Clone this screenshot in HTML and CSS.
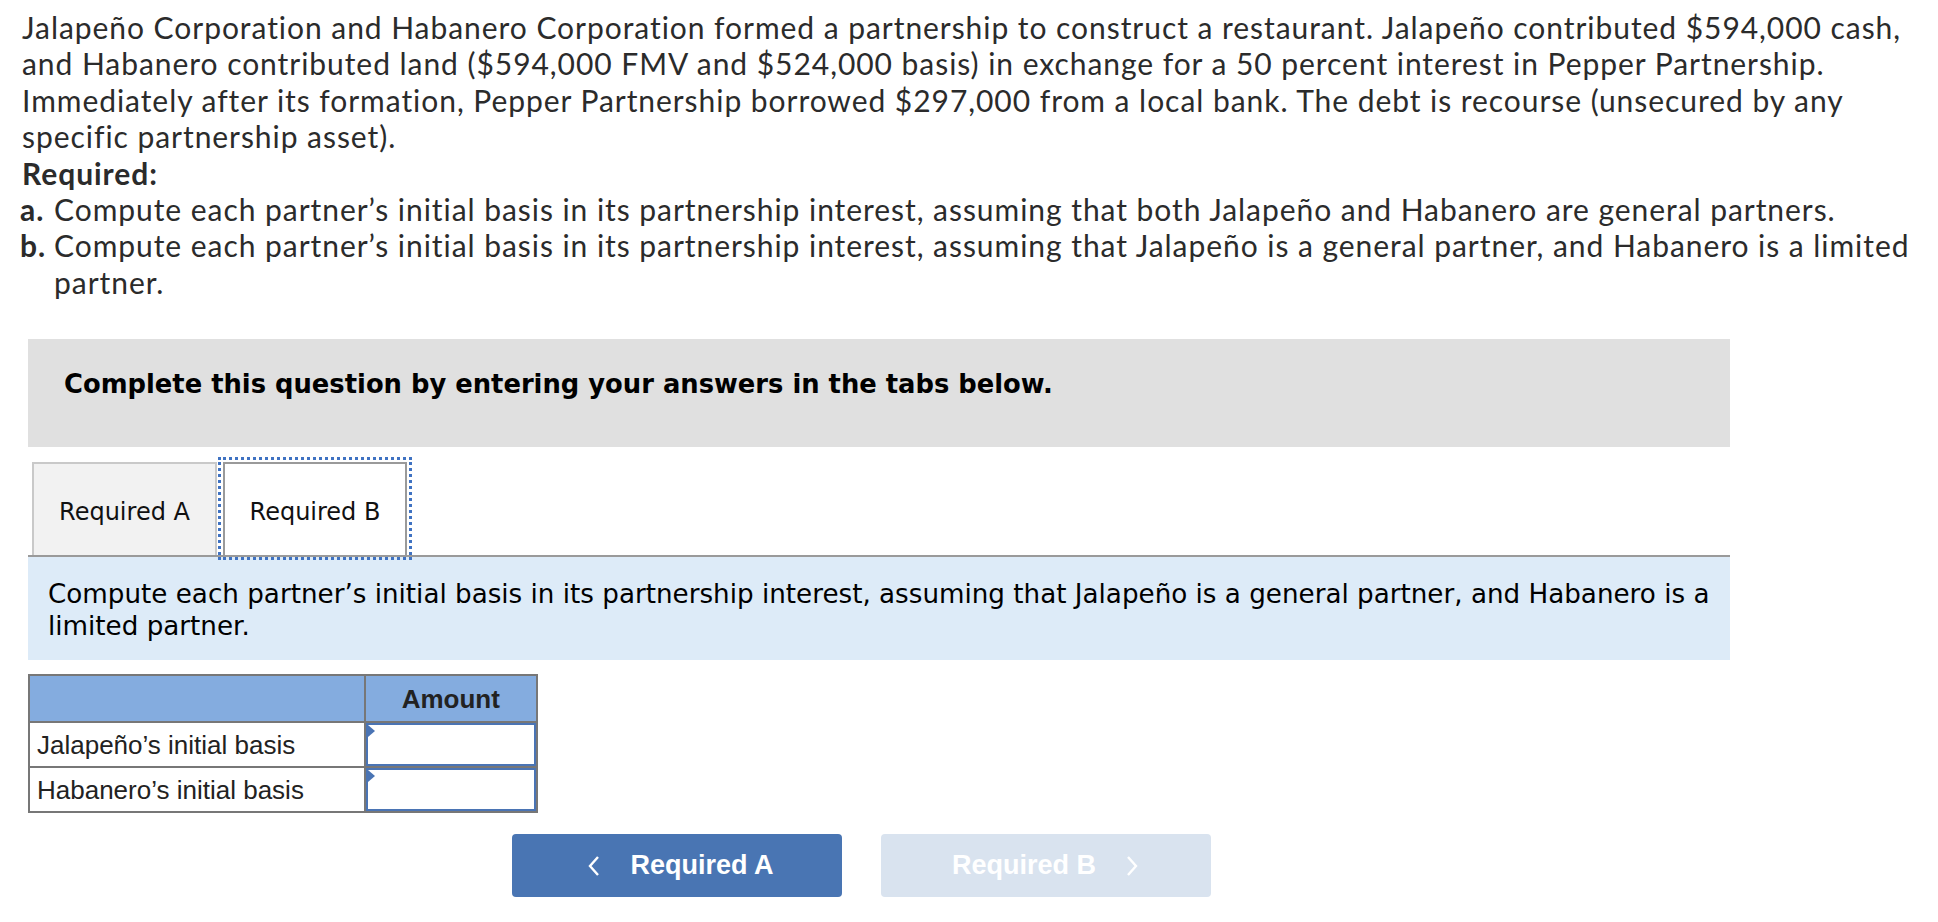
FILE: index.html
```html
<!DOCTYPE html>
<html lang="en">
<head>
<meta charset="utf-8">
<title>Pepper Partnership</title>
<link rel="stylesheet" href="styles.css">
</head>
<body>
<div class="question">
  <p class="prompt">Jalapeño Corporation and Habanero Corporation formed a partnership to construct a restaurant. Jalapeño contributed $594,000 cash, and Habanero contributed land ($594,000 FMV and $524,000 basis) in exchange for a 50 percent interest in Pepper Partnership. Immediately after its formation, Pepper Partnership borrowed $297,000 from a local bank. The debt is recourse (unsecured by any specific partnership asset).</p>
  <p class="req-title">Required:</p>
  <ul class="req-list">
    <li><b class="req-label">a.</b><span>Compute each partner’s initial basis in its partnership interest, assuming that both Jalapeño and Habanero are general partners.</span></li>
    <li><b class="req-label">b.</b><span>Compute each partner’s initial basis in its partnership interest, assuming that Jalapeño is a general partner, and Habanero is a limited partner.</span></li>
  </ul>
</div>

<div class="workarea">
  <div class="instructions">Complete this question by entering your answers in the tabs below.</div>

  <div class="tabs">
    <button class="tab">Required A</button>
    <button class="tab active">Required B</button>
  </div>

  <div class="tab-desc">Compute each partner’s initial basis in its partnership interest, assuming that Jalapeño is a general partner, and Habanero is a limited partner.</div>

  <table class="answer">
    <colgroup><col class="c-label"><col class="c-amt"></colgroup>
    <thead>
      <tr><th></th><th>Amount</th></tr>
    </thead>
    <tbody>
      <tr><td class="lbl">Jalapeño’s initial basis</td><td class="inp"><div class="field"><input type="text" aria-label="Jalapeño’s initial basis"><span class="flag"></span></div></td></tr>
      <tr><td class="lbl">Habanero’s initial basis</td><td class="inp"><div class="field"><input type="text" aria-label="Habanero’s initial basis"><span class="flag"></span></div></td></tr>
    </tbody>
  </table>

  <div class="nav">
    <button class="nav-btn prev">
      <svg class="chev" width="12" height="20" viewBox="0 0 12 20"><polyline points="10,1 2,10 10,19" fill="none" stroke="currentColor" stroke-width="2.4"/></svg>
      <span>Required A</span>
    </button>
    <button class="nav-btn next" disabled>
      <span>Required B</span>
      <svg class="chev" width="12" height="20" viewBox="0 0 12 20"><polyline points="2,1 10,10 2,19" fill="none" stroke="currentColor" stroke-width="2.4"/></svg>
    </button>
  </div>
</div>
</body>
</html>
```
FILE: styles.css
```css
* { box-sizing: border-box; }

body {
  margin: 0;
  background: #fff;
  color: #2b2b2b;
}

.question {
  padding: 9px 4px 0 22px;
  font-family: "Lato", "Open Sans", sans-serif;
  font-size: 30px;
  letter-spacing: 0.95px;
  line-height: 36.4px;
}

.question p { margin: 0; }

.req-title { font-weight: 700; }

.req-list {
  list-style: none;
  margin: 0 0 0 -2px;
  padding: 0;
}

.req-list li { display: flex; }

.req-label {
  flex: 0 0 34px;
  font-weight: 700;
}

.workarea {
  margin: 39px 0 0 28px;
  width: 1702px;
}

.instructions {
  height: 108px;
  padding: 30px 0 0 36px;
  background: #e0e0e0;
  color: #000;
  font-family: "DejaVu Sans", Verdana, sans-serif;
  font-weight: 700;
  font-size: 25.8px;
  line-height: 30px;
}

.tabs {
  display: flex;
  gap: 6px;
  padding: 15px 0 0 4px;
  border-bottom: 2px solid #9a9a9a;
}

.tab {
  height: 93px;
  padding: 4px 0 0;
  border: 2px solid #c9c9c9;
  border-bottom: none;
  background: #f2f2f2;
  color: #111;
  font-family: "DejaVu Sans", Verdana, sans-serif;
  font-size: 24px;
  width: 185px;
  cursor: pointer;
}

.tab.active {
  width: 184px;
  background: #fff;
  border-color: #9a9a9a;
  outline: 3px dotted #3f72c2;
  outline-offset: 2px;
}

.tab-desc {
  padding: 21px 20px 18px;
  background: #ddebf8;
  color: #000;
  font-family: "DejaVu Sans", Verdana, sans-serif;
  font-size: 26.2px;
  line-height: 32px;
}

.answer {
  margin-top: 14px;
  width: 510px;
  border-collapse: collapse;
  border: 2px solid #777;
  font-family: "Liberation Sans", Arial, sans-serif;
  font-size: 26px;
  color: #222;
}

.c-label { width: 337px; }
.c-amt { width: 173px; }

.answer th,
.answer td {
  border: 2px solid #777;
  padding: 0;
}

.answer th {
  height: 47px;
  background: #84acdf;
  font-weight: 700;
  text-align: center;
  padding-top: 2px;
}

.answer td { height: 45px; }

.answer td.lbl {
  padding: 1px 0 0 7px;
  text-align: left;
}

.field {
  position: relative;
  height: 43px;
}

.field input {
  display: block;
  width: 100%;
  height: 100%;
  margin: 0;
  border: 2px solid #4a74b4;
  background: #fff;
  font: inherit;
  padding: 0 6px;
  text-align: right;
}

.flag {
  position: absolute;
  left: 2px;
  top: 2px;
  width: 0;
  height: 0;
  border-top: 6px solid transparent;
  border-bottom: 6px solid transparent;
  border-left: 7px solid #4a74b4;
}

.nav {
  display: flex;
  justify-content: center;
  gap: 39px;
  margin-top: 21px;
  padding-right: 35px;
}

.nav-btn {
  width: 330px;
  height: 63px;
  border: none;
  border-radius: 4px;
  display: inline-flex;
  align-items: center;
  justify-content: center;
  gap: 30px;
  color: #fff;
  font-family: "Liberation Sans", Arial, sans-serif;
  font-weight: 700;
  font-size: 27px;
  letter-spacing: 0;
}

.nav-btn.prev { background: #4975b3; cursor: pointer; padding-left: 14px; }
.nav-btn.next { background: #d9e3ef; gap: 30px; padding-left: 4px; }

.chev { display: block; }
```
